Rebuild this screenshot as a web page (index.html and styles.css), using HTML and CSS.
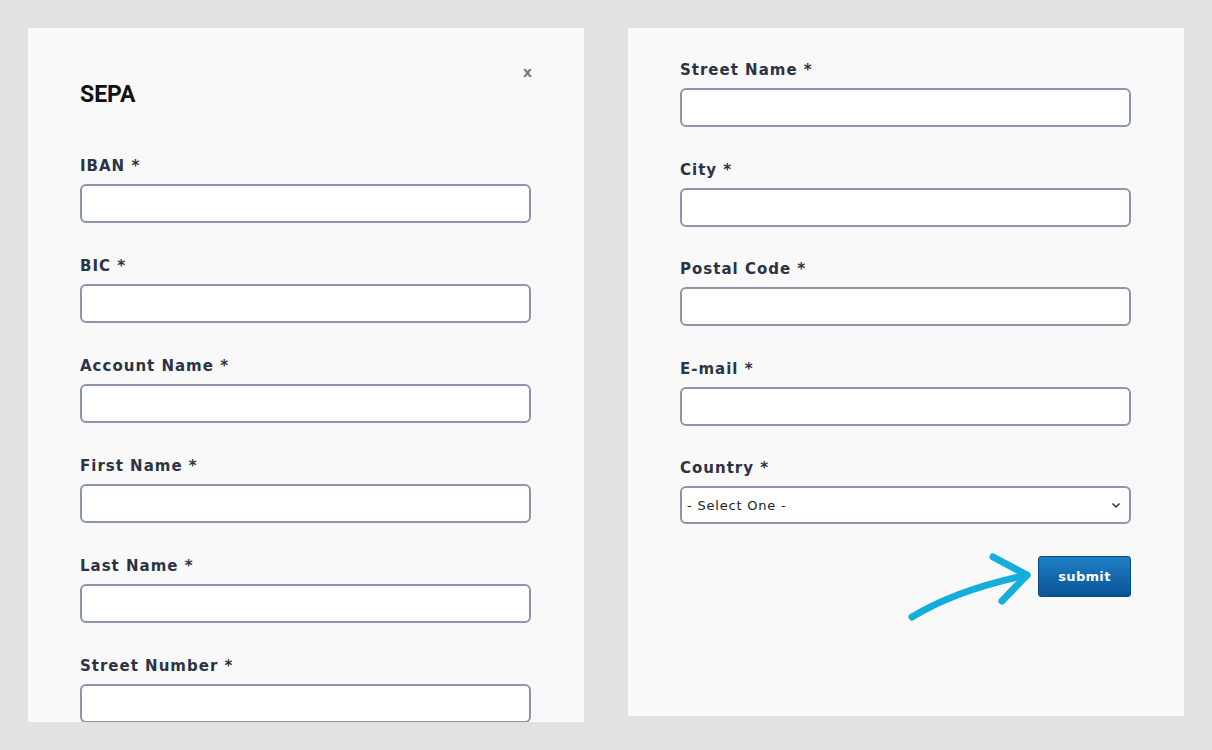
FILE: index.html
```html
<!DOCTYPE html>
<html>
<head>
<meta charset="utf-8">
<link rel="stylesheet" href="styles.css">
</head>
<body>
<div class="page">
  <section class="panel panel-left">
    <span class="close">x</span>
    <h1 class="title">SEPA</h1>
    <div class="field"><label class="label">IBAN *</label><input class="input" type="text"></div>
    <div class="field"><label class="label">BIC *</label><input class="input" type="text"></div>
    <div class="field"><label class="label">Account Name *</label><input class="input" type="text"></div>
    <div class="field"><label class="label">First Name *</label><input class="input" type="text"></div>
    <div class="field"><label class="label">Last Name *</label><input class="input" type="text"></div>
    <div class="field"><label class="label">Street Number *</label><input class="input" type="text"></div>
  </section>
  <section class="panel panel-right">
    <div class="field field-r"><label class="label">Street Name *</label><input class="input" type="text"></div>
    <div class="field field-r"><label class="label">City *</label><input class="input" type="text"></div>
    <div class="field field-r"><label class="label">Postal Code *</label><input class="input" type="text"></div>
    <div class="field field-r"><label class="label">E-mail *</label><input class="input" type="text"></div>
    <div class="field field-last"><label class="label">Country *</label>
      <div class="select">
        <span class="select-text">- Select One -</span>
        <svg class="chev" width="10" height="7" viewBox="0 0 10 7"><path d="M1.5 1.5 L5 5 L8.5 1.5" fill="none" stroke="#333" stroke-width="1.5"/></svg>
      </div>
    </div>
    <div class="actions">
      <button class="submit">submit</button>
    </div>
    <svg class="arrow" width="140" height="80" viewBox="0 0 140 80">
      <path d="M4 73 Q48 46 119 31" fill="none" stroke="#14aedc" stroke-width="7" stroke-linecap="round"/>
      <path d="M85 13 L119 31 L94 57" fill="none" stroke="#14aedc" stroke-width="7" stroke-linecap="round" stroke-linejoin="round"/>
    </svg>
  </section>
</div>
</body>
</html>
```
FILE: styles.css
```css
html, body {
  margin: 0;
  padding: 0;
  background: #e2e2e2;
}
.page {
  display: flex;
  gap: 44px;
  padding: 28px 0 0 28px;
  height: 722px;
  box-sizing: border-box;
  align-items: flex-start;
}
.panel {
  position: relative;
  width: 556px;
  background: #f9f9f9;
  box-sizing: border-box;
  padding: 0 53px 0 52px;
}
.panel-left {
  height: 694px;
  padding-top: 52px;
  overflow: hidden;
}
.panel-right {
  height: 688px;
  padding-top: 34px;
}
.close {
  position: absolute;
  top: 34px;
  right: 52px;
  font-family: "DejaVu Sans", sans-serif;
  font-weight: 700;
  font-size: 14px;
  color: #7a7a7a;
  line-height: 20px;
}
.title {
  margin: 2px 0 50px 0;
  font-family: Roboto, "Liberation Sans", sans-serif;
  font-weight: 700;
  font-size: 23px;
  line-height: 26px;
  color: #111;
}
.field {
  display: flex;
  flex-direction: column;
  margin-bottom: 35px;
}
.field-r {
  margin-bottom: 34.5px;
}
.field-last {
  margin-bottom: 32px;
}
.label {
  font-family: "DejaVu Sans", Verdana, sans-serif;
  font-weight: 700;
  font-size: 15px;
  line-height: 16px;
  letter-spacing: 1px;
  color: #2b3345;
  margin-bottom: 10px;
}
.input {
  display: block;
  width: 451px;
  height: 39px;
  box-sizing: border-box;
  border: 2px solid #8c96aa;
  border-radius: 6px;
  background: #fff;
  margin: 0;
  padding: 0 8px;
}
.select {
  width: 451px;
  height: 38px;
  box-sizing: border-box;
  border: 2px solid #8c96aa;
  border-radius: 6px;
  background: #fff;
  display: flex;
  align-items: center;
  justify-content: space-between;
  padding: 0 8px 0 5px;
}
.select-text {
  font-family: "DejaVu Sans", Verdana, sans-serif;
  font-size: 13px;
  letter-spacing: 0.8px;
  color: #222;
}
.actions {
  display: flex;
  justify-content: flex-end;
  width: 451px;
}
.submit {
  width: 93px;
  height: 41px;
  border: 1px solid #0a4a85;
  border-radius: 3px;
  background: linear-gradient(#1e7fc2, #0a5399);
  color: #fff;
  font-family: "DejaVu Sans", Verdana, sans-serif;
  font-weight: 700;
  font-size: 13px;
  letter-spacing: 0.3px;
  padding: 0;
}
.arrow {
  position: absolute;
  left: 280px;
  top: 516px;
}
```
